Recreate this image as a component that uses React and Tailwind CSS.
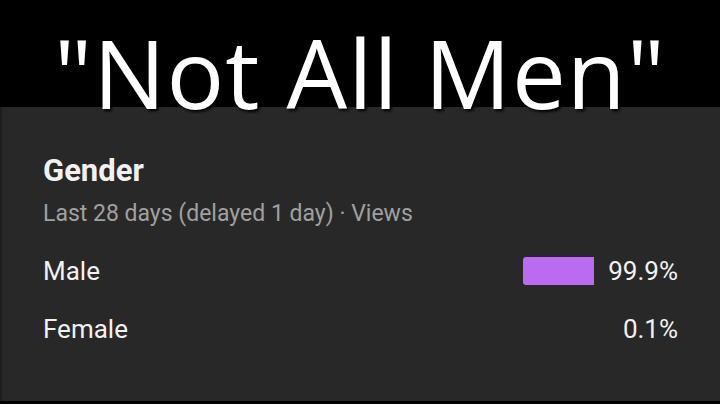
export default function App() {
  const rows = [
    { label: 'Male', value: '99.9%', bar: true },
    { label: 'Female', value: '0.1%', bar: false },
  ]

  return (
    <div className="flex h-[404px] w-[720px] flex-col overflow-hidden bg-black">
      <div className="relative z-10 h-[107px] pt-[24px] text-center">
        <h1 className="font-['Open_Sans',sans-serif] text-[96px] leading-none tracking-[1px] text-white [text-shadow:2px_2px_3px_#000]">
          "Not All Men"
        </h1>
      </div>

      <div className="flex-1 border-l-2 border-[#1e1e1e] bg-[#282828] pl-[41px] pr-[42px] pt-[48px] font-['Roboto',sans-serif] text-[#f1f1f1]">
        <h2 className="text-[31px] font-bold leading-[31px]">Gender</h2>
        <p className="mt-[16px] text-[23px] leading-[23px] text-[#a0a0a0]">
          Last 28 days (delayed 1 day) · Views
        </p>

        <div className="mt-[32px] flex flex-col gap-[30px]">
          {rows.map((row) => (
            <div key={row.label} className="flex h-[28px] items-center text-[26px] leading-[28px]">
              <span className="flex-1">{row.label}</span>
              {row.bar && (
                <div className="mr-[14px] h-[28px] w-[71px] rounded-l-[3px] bg-[#b96cf1]" />
              )}
              <span>{row.value}</span>
            </div>
          ))}
        </div>
      </div>

      <div className="h-[3px] bg-black" />
    </div>
  )
}
